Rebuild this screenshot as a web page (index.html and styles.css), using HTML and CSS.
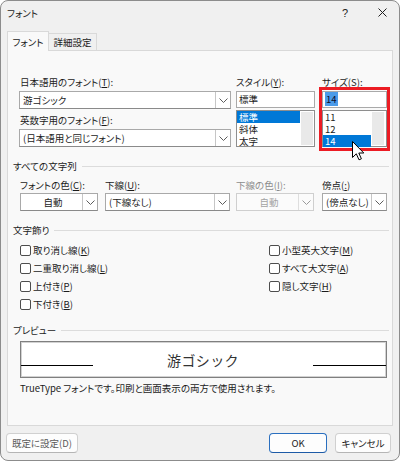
FILE: index.html
```html
<!DOCTYPE html>
<html lang="ja">
<head>
<meta charset="utf-8">
<title>フォント</title>
<link rel="stylesheet" href="styles.css">
</head>
<body>
<div class="window">
  <div class="titlebar">
    <span class="title">フォント</span>
    <span class="cap help">?</span>
    <span class="cap close"><svg width="9" height="9" viewBox="0 0 9 9"><path d="M0.5 0.5L8.5 8.5M8.5 0.5L0.5 8.5" stroke="#1f1f1f" stroke-width="1" fill="none"/></svg></span>
  </div>
  <div class="tabs">
    <div class="tab active">フォント</div>
    <div class="tab">詳細設定</div>
  </div>
  <div class="panel">
    <div class="top-row">
      <div class="col col-font">
        <div class="lbl">日本語用のフォント(<u>T</u>):</div>
        <div class="combo"><span class="val">游ゴシック</span><span class="btn"><svg width="9" height="5" viewBox="0 0 9 5"><polyline points="0.5,0.5 4.5,4.5 8.5,0.5" fill="none" stroke="#5c5c5c"/></svg></span></div>
        <div class="lbl lbl2">英数字用のフォント(<u>F</u>):</div>
        <div class="combo"><span class="val">(日本語用と同じフォント)</span><span class="btn"><svg width="9" height="5" viewBox="0 0 9 5"><polyline points="0.5,0.5 4.5,4.5 8.5,0.5" fill="none" stroke="#5c5c5c"/></svg></span></div>
      </div>
      <div class="col col-style">
        <div class="lbl">スタイル(<u>Y</u>):</div>
        <div class="textbox">標準</div>
        <div class="listbox">
          <div class="items">
            <div class="item sel">標準</div>
            <div class="item">斜体</div>
            <div class="item">太字</div>
          </div>
          <div class="scroll"></div>
        </div>
      </div>
      <div class="col col-size">
        <div class="lbl">サイズ(<u>S</u>):</div>
        <div class="textbox"><span class="selected-text">14</span></div>
        <div class="listbox">
          <div class="items">
            <div class="item">11</div>
            <div class="item">12</div>
            <div class="item sel">14</div>
          </div>
          <div class="scroll scroll-size"></div>
        </div>
        <div class="highlight"></div>
      </div>
    </div>

    <div class="grp-title g1">すべての文字列</div>
    <div class="attr-row">
      <div class="fld f1">
        <div class="lbl">フォントの色(<u>C</u>):</div>
        <div class="combo"><span class="val center">自動</span><span class="btn"><svg width="9" height="5" viewBox="0 0 9 5"><polyline points="0.5,0.5 4.5,4.5 8.5,0.5" fill="none" stroke="#5c5c5c"/></svg></span></div>
      </div>
      <div class="fld f2">
        <div class="lbl">下線(<u>U</u>):</div>
        <div class="combo"><span class="val">(下線なし)</span><span class="btn"><svg width="9" height="5" viewBox="0 0 9 5"><polyline points="0.5,0.5 4.5,4.5 8.5,0.5" fill="none" stroke="#5c5c5c"/></svg></span></div>
      </div>
      <div class="fld f3 disabled">
        <div class="lbl">下線の色(<u>I</u>):</div>
        <div class="combo"><span class="val center">自動</span><span class="btn"><svg width="9" height="5" viewBox="0 0 9 5"><polyline points="0.5,0.5 4.5,4.5 8.5,0.5" fill="none" stroke="#9a9a9a"/></svg></span></div>
      </div>
      <div class="fld f4">
        <div class="lbl">傍点(<u>:</u>)</div>
        <div class="combo"><span class="val">(傍点なし)</span><span class="btn"><svg width="9" height="5" viewBox="0 0 9 5"><polyline points="0.5,0.5 4.5,4.5 8.5,0.5" fill="none" stroke="#5c5c5c"/></svg></span></div>
      </div>
    </div>

    <div class="grp-title g2">文字飾り</div>
    <div class="checks">
      <div class="chk"><span class="box"></span>取り消し線(<u>K</u>)</div>
      <div class="chk"><span class="box"></span>小型英大文字(<u>M</u>)</div>
      <div class="chk"><span class="box"></span>二重取り消し線(<u>L</u>)</div>
      <div class="chk"><span class="box"></span>すべて大文字(<u>A</u>)</div>
      <div class="chk"><span class="box"></span>上付き(<u>P</u>)</div>
      <div class="chk"><span class="box"></span>隠し文字(<u>H</u>)</div>
      <div class="chk"><span class="box"></span>下付き(<u>B</u>)</div>
    </div>

    <div class="grp-title g3">プレビュー</div>
    <div class="preview">
      <div class="pline pl-left"></div>
      <div class="ptext">游ゴシック</div>
      <div class="pline pl-right"></div>
    </div>
    <div class="note">TrueType フォントです。印刷と画面表示の両方で使用されます。</div>
  </div>
  <div class="footer">
    <div class="button b-default">既定に設定(D)</div>
    <div class="right-btns">
      <div class="button b-ok">OK</div>
      <div class="button b-cancel">キャンセル</div>
    </div>
  </div>
  <svg class="cursor" width="13" height="20" viewBox="0 0 13 20"><path d="M0.5 0.5 L0.5 16.5 L4.3 12.8 L7 18.8 L9.4 17.8 L6.8 12 L11.8 12 Z" fill="#fff" stroke="#000" stroke-width="1" stroke-linejoin="miter"/></svg>
</div>
</body>
</html>
```

FILE: styles.css
```css
* { box-sizing: border-box; margin: 0; padding: 0; }
html, body { width: 400px; height: 461px; overflow: hidden; background: #ffffff; }
body {
  font-family: "Noto Sans CJK JP", "Noto Sans", sans-serif;
  font-size: 9.5px;
  line-height: 14px;
  color: #1b1b1b;
  font-feature-settings: "palt";
}
u { text-decoration: underline; text-underline-offset: 1px; }

.window {
  position: relative;
  width: 400px;
  height: 461px;
  border: 1px solid #8c8c8c;
  border-radius: 8px;
  background: #f0f0f0;
  overflow: hidden;
}

.titlebar {
  height: 23px;
  display: flex;
  align-items: center;
  padding-left: 6px;
  padding-right: 3px;
  gap: 9px;
}
.title { flex: 1; font-size: 9.5px; }
.cap { width: 28px; display: flex; justify-content: center; align-items: center; }
.help { font-size: 11px; font-family: "Liberation Sans", sans-serif; }

.tabs {
  margin-top: 7px;
  margin-left: 6px;
  height: 19px;
  display: flex;
  align-items: flex-end;
}
.tab {
  height: 17px;
  line-height: 16px;
  border: 1px solid #d9d9d9;
  border-bottom: none;
  background: #f0f0f0;
  text-align: center;
}
.tab.active {
  position: relative;
  z-index: 1;
  width: 42px;
  height: 20px;
  margin-bottom: -1px;
  line-height: 20px;
  background: #f9f9f9;
}
.tab:not(.active) { width: 48px; border-left: none; }

.panel {
  margin-left: 6px;
  width: 386px;
  height: 376px;
  background: #f9f9f9;
  border: 1px solid #d9d9d9;
  padding: 24px 3px 0 5px;
}

.lbl { height: 14px; line-height: 14px; white-space: nowrap; }

.top-row { display: flex; margin-left: 7px; }
.col { display: flex; flex-direction: column; }
.col-font { width: 210px; }
.col-style { width: 79px; margin-left: 6px; }
.col-size { width: 65px; margin-left: 7px; position: relative; }

.combo {
  height: 18px;
  margin-top: 2px;
  display: flex;
  background: #ffffff;
  border: 1px solid #a9a9a9;
  border-bottom-color: #8a8a8a;
}
.combo .val { flex: 1; padding-left: 3px; line-height: 16px; white-space: nowrap; overflow: hidden; }
.combo .val.center { text-align: center; }
.combo .btn {
  width: 15px;
  border-left: 1px solid #c6c6c6;
  display: flex;
  align-items: center;
  justify-content: center;
}
.col-font .combo { margin-left: -1px; margin-bottom: 4px; width: 212px; }

.textbox {
  height: 17px;
  margin-top: 2px;
  background: #fff;
  border: 1px solid #a9a9a9;
  padding-left: 2px;
  line-height: 15px;
}
.selected-text { background: #4b9be9; color: #0b0b2a; padding: 0 1px; }

.listbox {
  height: 37px;
  margin-top: 2px;
  display: flex;
  background: #fff;
  border: 1px solid #8e8e8e;
}
.items { flex: 1; }
.item { height: 12px; line-height: 12px; padding-left: 2px; }
.item.sel { background: #0078d7; color: #fff; }
.scroll { width: 12px; margin: 1px; background: #e9e9e9; }
.scroll-size { margin-right: 2px; }

.highlight {
  position: absolute;
  left: -3px;
  top: 12px;
  width: 71px;
  height: 64px;
  border: 3px solid #ec1c24;
}

.grp-title { display: flex; align-items: center; height: 14px; white-space: nowrap; }
.grp-title::after { content: ""; flex: 1; height: 1px; background: #dcdcdc; margin-left: 5px; }
.g1 { margin-top: 8px; }
.g2 { margin-top: 12px; }
.g3 { margin-top: 10px; }

.attr-row { display: flex; margin-left: 7px; margin-top: 5px; }
.fld .combo { margin-top: 1px; }
.f1 { width: 78px; }
.f2 { width: 125px; margin-left: 7px; }
.f3 { width: 78px; margin-left: 6px; }
.f4 { width: 65px; margin-left: 8px; }
.disabled .lbl { color: #8c8c8c; }
.disabled .combo { background: #fbfbfb; border-color: #cfcfcf; }
.disabled .combo .val { color: #a3a3a3; }
.disabled .combo .btn { border-left-color: #dedede; }

.checks {
  margin-top: 4px;
  margin-left: 7px;
  display: grid;
  grid-template-columns: 249px auto;
  grid-auto-rows: 18px;
}
.chk { display: flex; align-items: center; white-space: nowrap; }
.box {
  width: 11px;
  height: 11px;
  border: 1px solid #4d4d4d;
  border-radius: 2px;
  background: #fff;
  margin-right: 2px;
  flex: none;
}

.preview {
  margin-top: 4px;
  margin-left: 7px;
  width: 367px;
  height: 37px;
  background: #fff;
  border: 1px solid #7f7f7f;
  box-shadow: inset 0 0 0 1px #d2d2d2;
  display: flex;
  align-items: flex-start;
}
.pline { height: 24px; border-bottom: 1px solid #000; flex: none; }
.pl-left { width: 72px; }
.pl-right { width: 73px; }
.ptext {
  flex: 1;
  text-align: center;
  font-size: 14px;
  line-height: 35px;
  letter-spacing: 0.4px;
  color: #333;
  font-feature-settings: normal;
  padding-top: 1px;
}
.note { margin-top: 3px; margin-left: 7px; line-height: 14px; white-space: nowrap; }

.footer {
  margin-top: 7px;
  display: flex;
  justify-content: space-between;
  padding-left: 5px;
  padding-right: 8px;
}
.right-btns { display: flex; gap: 8px; }
.button {
  height: 20px;
  line-height: 18px;
  text-align: center;
  background: #fdfdfd;
  border: 1px solid #d0d0d0;
  border-bottom-color: #b5b5b5;
  border-radius: 4px;
  white-space: nowrap;
}
.b-default { width: 72px; color: #5a5a5a; }
.b-ok { width: 58px; border-color: #2a6fbf; border-bottom-color: #1c5aa6; }
.b-cancel { width: 56px; }

.cursor { position: absolute; left: 351px; top: 140px; }
```
